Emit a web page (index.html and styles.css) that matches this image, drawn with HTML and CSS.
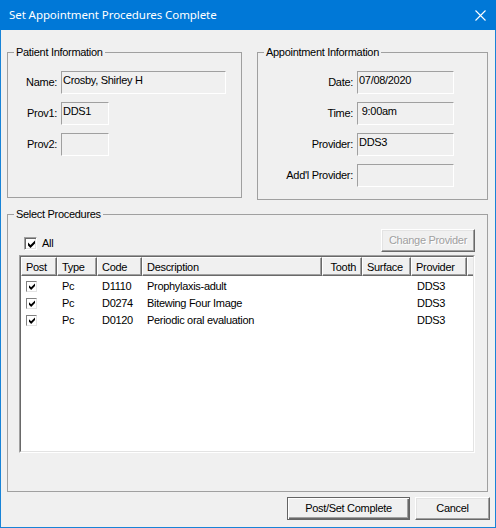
FILE: index.html
```html
<!DOCTYPE html>
<html>
<head>
<meta charset="utf-8">
<title>Set Appointment Procedures Complete</title>
<link rel="stylesheet" href="styles.css">
</head>
<body>
<div class="window">
  <div class="titlebar">
    <span class="title">Set Appointment Procedures Complete</span>
    <svg class="close" viewBox="0 0 11 11" width="11" height="11"><path d="M0.5 0.5 L10.5 10.5 M10.5 0.5 L0.5 10.5" stroke="#fff" stroke-width="1.1" fill="none"/></svg>
  </div>
  <div class="client">
    <div class="top-row">
      <section class="group patient">
        <div class="group-title">Patient Information</div>
        <div class="group-body patient-body">
          <div class="field"><label class="lbl-p">Name:</label><div class="tb tb-name">Crosby, Shirley H</div></div>
          <div class="field"><label class="lbl-p">Prov1:</label><div class="tb tb-prov">DDS1</div></div>
          <div class="field"><label class="lbl-p">Prov2:</label><div class="tb tb-prov"></div></div>
        </div>
      </section>
      <section class="group appt">
        <div class="group-title">Appointment Information</div>
        <div class="group-body appt-body">
          <div class="field"><label class="lbl-a">Date:</label><div class="tb tb-appt">07/08/2020</div></div>
          <div class="field"><label class="lbl-a">Time:</label><div class="tb tb-appt">&nbsp;9:00am</div></div>
          <div class="field"><label class="lbl-a">Provider:</label><div class="tb tb-appt">DDS3</div></div>
          <div class="field"><label class="lbl-a">Add'l Provider:</label><div class="tb tb-appt"></div></div>
        </div>
      </section>
    </div>
    <section class="group procs">
      <div class="group-title">Select Procedures</div>
      <div class="group-body procs-body">
        <div class="toolbar">
          <label class="chk-all"><span class="chk"><svg viewBox="0 0 7 8" width="7" height="8"><polygon points="0,2.5 2.5,5 7,0.5 7,3.5 2.5,8 0,5.5" fill="#000"/></svg></span><span>All</span></label>
          <button class="btn btn-change" disabled>Change Provider</button>
        </div>
        <div class="listview">
          <div class="lv-inner">
            <div class="lv-header">
              <div class="hc c-post">Post</div>
              <div class="hc c-type">Type</div>
              <div class="hc c-code">Code</div>
              <div class="hc c-desc">Description</div>
              <div class="hc c-tooth">Tooth</div>
              <div class="hc c-surf">Surface</div>
              <div class="hc c-prov">Provider</div>
              <div class="hc c-fill"></div>
            </div>
            <div class="lv-body">
              <div class="lv-row">
                <div class="cell c-post"><span class="chk chk-sm"><svg viewBox="0 0 7 8" width="6" height="7"><polygon points="0,2.5 2.5,5 7,0.5 7,3.5 2.5,8 0,5.5" fill="#000"/></svg></span></div>
                <div class="cell c-type">Pc</div>
                <div class="cell c-code">D1110</div>
                <div class="cell c-desc">Prophylaxis-adult</div>
                <div class="cell c-tooth"></div>
                <div class="cell c-surf"></div>
                <div class="cell c-prov">DDS3</div>
              </div>
              <div class="lv-row">
                <div class="cell c-post"><span class="chk chk-sm"><svg viewBox="0 0 7 8" width="6" height="7"><polygon points="0,2.5 2.5,5 7,0.5 7,3.5 2.5,8 0,5.5" fill="#000"/></svg></span></div>
                <div class="cell c-type">Pc</div>
                <div class="cell c-code">D0274</div>
                <div class="cell c-desc">Bitewing Four Image</div>
                <div class="cell c-tooth"></div>
                <div class="cell c-surf"></div>
                <div class="cell c-prov">DDS3</div>
              </div>
              <div class="lv-row">
                <div class="cell c-post"><span class="chk chk-sm"><svg viewBox="0 0 7 8" width="6" height="7"><polygon points="0,2.5 2.5,5 7,0.5 7,3.5 2.5,8 0,5.5" fill="#000"/></svg></span></div>
                <div class="cell c-type">Pc</div>
                <div class="cell c-code">D0120</div>
                <div class="cell c-desc">Periodic oral evaluation</div>
                <div class="cell c-tooth"></div>
                <div class="cell c-surf"></div>
                <div class="cell c-prov">DDS3</div>
              </div>
            </div>
          </div>
        </div>
      </div>
    </section>
    <div class="buttons">
      <button class="btn btn-default btn-post">Post/Set Complete</button>
      <button class="btn btn-cancel">Cancel</button>
    </div>
  </div>
</div>
</body>
</html>
```

FILE: styles.css
```css
* { box-sizing: border-box; }
html, body { margin: 0; padding: 0; }
body {
  width: 496px;
  height: 528px;
  overflow: hidden;
  background: #f0f0f0;
  color: #000;
  font-family: "Liberation Sans", Arial, sans-serif;
  font-size: 11px;
  line-height: 13px;
  letter-spacing: -0.3px;
}
.window {
  width: 496px;
  height: 528px;
  display: flex;
  flex-direction: column;
}
.titlebar {
  flex: none;
  height: 30px;
  background: #0078d7;
  color: #fff;
  display: flex;
  align-items: center;
  padding-left: 9px;
}
.title {
  font-family: "Noto Sans", "Open Sans", sans-serif;
  font-size: 11.5px;
  letter-spacing: -0.08px;
  line-height: 16px;
}
.close {
  margin-left: auto;
  margin-right: 10px;
  display: block;
}
.client {
  flex: 1;
  border: 1px solid #1883d7;
  border-top: 0;
  padding: 22px 6px 0 6px;
  display: flex;
  flex-direction: column;
}
.top-row {
  display: flex;
  align-items: flex-start;
  gap: 15px;
}
.group {
  border: 1px solid #a0a0a0;
  display: flex;
  flex-direction: column;
  align-items: flex-start;
}
.group-title {
  margin: -7px 0 0 6px;
  padding: 0 2px;
  background: #f0f0f0;
  line-height: 13px;
  white-space: nowrap;
}
.patient { width: 235px; height: 146px; }
.appt { width: 231px; height: 148px; }
.group-body {
  display: flex;
  flex-direction: column;
  align-self: stretch;
}
.patient-body { padding: 12px 0 0 13px; gap: 8px; }
.appt-body { padding: 12px 0 0 20px; gap: 8px; }
.field {
  display: flex;
  gap: 4px;
  height: 23px;
}
.field label {
  text-align: right;
  padding-top: 5px;
  white-space: nowrap;
}
.lbl-p { width: 36px; }
.lbl-a { width: 75px; }
.tb {
  height: 23px;
  border: 1px solid;
  border-color: #a0a0a0 #fff #fff #a0a0a0;
  padding: 1.5px 0 0 1px;
  white-space: nowrap;
  overflow: hidden;
}
.tb-name { width: 165px; }
.tb-prov { width: 48px; }
.tb-appt { width: 97px; }

.procs {
  margin-top: 14px;
  width: 481px;
  height: 278px;
}
.procs-body { padding: 8px 12px 0 11px; }
.toolbar {
  display: flex;
  justify-content: space-between;
  align-items: flex-start;
  height: 23px;
}
.chk-all {
  display: flex;
  align-items: flex-start;
  gap: 5px;
  margin: 8px 0 0 5px;
}
.chk {
  display: flex;
  align-items: center;
  justify-content: center;
  width: 13px;
  height: 13px;
  background: #fff;
  border: 1px solid;
  border-color: #a0a0a0 #fff #fff #a0a0a0;
  box-shadow: inset 1px 1px 0 #696969, inset -1px -1px 0 #e3e3e3;
  padding: 1px 0 0 1px;
}
.chk svg { display: block; }
.chk-sm {
  width: 11px;
  height: 11px;
  border-color: #808080 #e3e3e3 #e3e3e3 #808080;
  box-shadow: none;
  padding: 0;
}
.btn {
  font-family: "Liberation Sans", Arial, sans-serif;
  font-size: 11px;
  letter-spacing: -0.3px;
  line-height: 13px;
  color: #000;
  height: 23px;
  padding: 0;
  margin: 0;
  background: #f0f0f0;
  border: 1px solid;
  border-color: #fff #696969 #696969 #fff;
  box-shadow: inset -1px -1px 0 #a0a0a0, inset 1px 1px 0 #e3e3e3;
  border-radius: 0;
}
.btn:disabled {
  color: #a0a0a0;
  text-shadow: 1px 1px 0 #fff;
}
.btn-default {
  border: 1px solid #646464;
  box-shadow: inset 1px 1px 0 #fff, inset -1px -1px 0 #696969, inset -2px -2px 0 #a0a0a0;
}
.btn-change { width: 94px; }
.btn-post { width: 123px; }
.btn-cancel { width: 75px; }

.listview {
  margin-top: 3px;
  height: 198px;
  border: 1px solid;
  border-color: #a0a0a0 #fff #fff #a0a0a0;
}
.lv-inner {
  height: 100%;
  background: #fff;
  border: 1px solid;
  border-color: #696969 #e3e3e3 #e3e3e3 #696969;
}
.lv-header {
  display: flex;
  height: 19px;
}
.hc {
  height: 19px;
  background: #f0f0f0;
  border-top: 1px solid #fff;
  border-left: 1px solid #fff;
  border-right: 1px solid #696969;
  border-bottom: 1px solid #696969;
  box-shadow: inset -1px -1px 0 #a0a0a0;
  padding: 3px 0 0 4px;
  white-space: nowrap;
  overflow: hidden;
}
.c-post { width: 36px; flex: none; }
.c-type { width: 40px; flex: none; }
.c-code { width: 45px; flex: none; }
.c-desc { width: 180px; flex: none; }
.c-tooth { width: 40px; flex: none; }
.c-surf { width: 49px; flex: none; }
.c-prov { width: 56px; flex: none; }
.c-fill { flex: 1; border-right: 0; box-shadow: inset 0 -1px 0 #a0a0a0; }
.hc.c-tooth { text-align: right; padding: 3px 5px 0 0; }
.lv-body { padding-top: 1px; }
.lv-row {
  display: flex;
  height: 17px;
}
.cell {
  padding: 3px 0 0 5px;
  white-space: nowrap;
  overflow: hidden;
}
.cell.c-post { padding-top: 4px; }
.cell.c-prov { padding-left: 6px; }
.buttons {
  display: flex;
  justify-content: flex-end;
  gap: 5px;
  margin-top: 5px;
  margin-right: -1px;
}
```
